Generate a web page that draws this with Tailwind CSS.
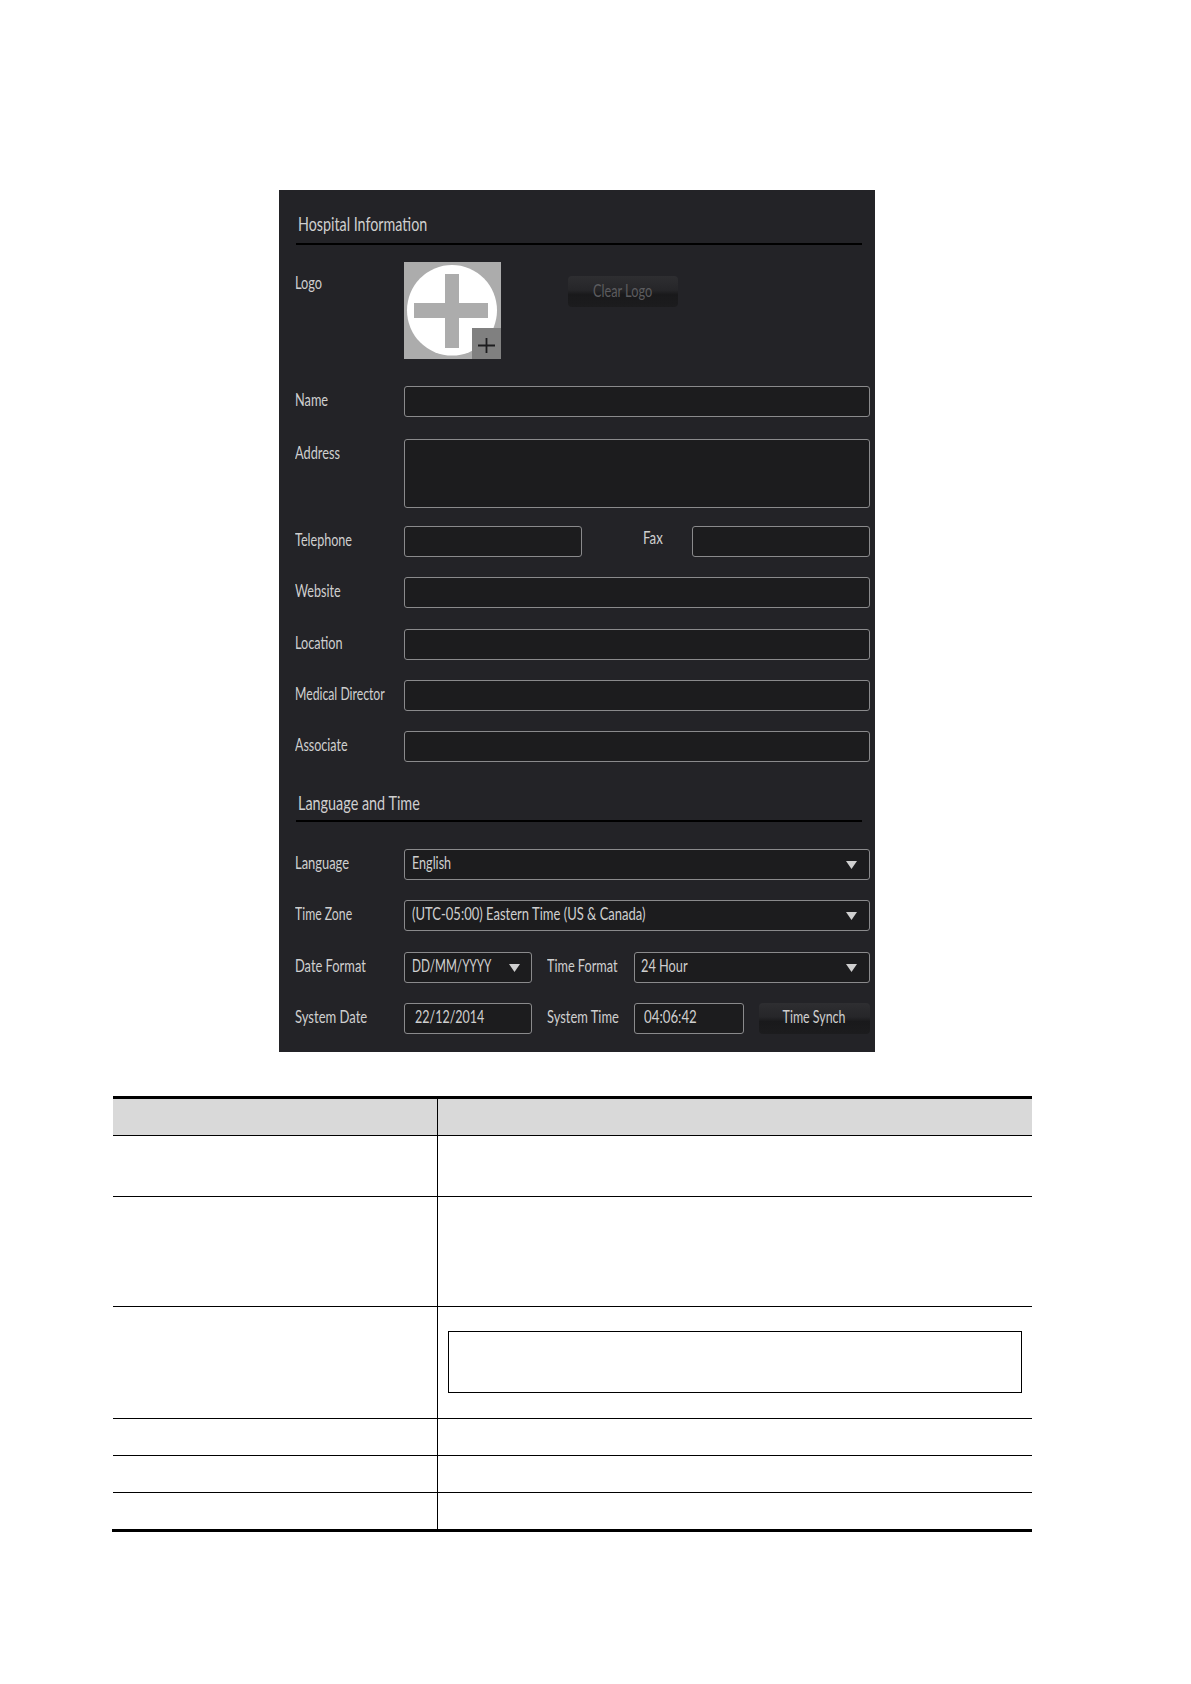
<!DOCTYPE html>
<html lang="en">

<head>
  <meta charset="UTF-8" />
  <title>Hospital Information</title>
  <script src="https://cdn.jsdelivr.net/npm/@tailwindcss/browser@4"></script>
</head>

<body class="bg-white font-['Lato','Liberation_Sans',sans-serif]">

  <div class="pt-[190px] pl-[112px] w-[1191px] h-[1684px]">

    <!-- Settings panel -->
    <div class="ml-[167px] w-[596px] h-[862px] pl-[16px] bg-[#232327] text-[#cfcfcf] text-[17px]">

      <div class="ml-[1px] w-[566px] h-[55px] pt-[19px] pl-[2px] border-b-2 border-black">
        <h2 class="text-[20px] leading-[28px] font-normal whitespace-nowrap origin-left scale-x-[0.715]">Hospital Information</h2>
      </div>

      <div class="flex mt-[17px] h-[97px]">
        <label class="w-[109px] mt-[7px] leading-[28px] whitespace-nowrap origin-left scale-x-[0.75]">Logo</label>
        <div class="relative w-[97px] h-[97px] bg-[#acacac] overflow-hidden">
          <svg width="97" height="97" viewBox="0 0 97 97">
            <ellipse cx="48" cy="48.300" rx="45" ry="45.300" fill="#fff" />
            <path d="M41 12h14v29h29v15H55v30H41V56H10V41h31z" fill="#acacac" />
          </svg>
          <div class="absolute right-0 bottom-0 w-[29px] h-[31px] pt-[3px] bg-[#808080] flex items-center justify-center">
            <svg width="19" height="17" viewBox="0 0 19 17"><path d="M9.500 1v15M1 8.500h17" stroke="#1c1c1e" stroke-width="1.800" /></svg>
          </div>
        </div>
        <button class="ml-[67px] mt-[14px] w-[110px] h-[31px] pb-[1px] rounded-[4px] bg-[linear-gradient(#2e2e31,#262629_45%,#19191b_60%,#1c1c1e)] text-[#5c5c5f]">
          <span class="inline-block whitespace-nowrap scale-x-[0.75]">Clear Logo</span>
        </button>
      </div>

      <div class="flex mt-[27px] h-[31px]">
        <label class="w-[109px] leading-[27px] whitespace-nowrap origin-left scale-x-[0.75]">Name</label>
        <input class="w-[466px] h-[31px] bg-[#1c1c1e] border border-[#8a8a8c] rounded-[3px]" />
      </div>

      <div class="flex mt-[22px] h-[69px]">
        <label class="w-[109px] leading-[28px] whitespace-nowrap origin-left scale-x-[0.75]">Address</label>
        <textarea class="w-[466px] h-[69px] bg-[#1c1c1e] border border-[#8a8a8c] rounded-[3px] resize-none"></textarea>
      </div>

      <div class="flex mt-[18px] h-[31px]">
        <label class="w-[109px] leading-[28px] whitespace-nowrap origin-left scale-x-[0.74]">Telephone</label>
        <input class="w-[178px] h-[31px] bg-[#1c1c1e] border border-[#8a8a8c] rounded-[3px]" />
        <div class="w-[110px] pl-[61px]">
          <label class="block leading-[24px] whitespace-nowrap origin-left scale-x-[0.78]">Fax</label>
        </div>
        <input class="w-[178px] h-[31px] bg-[#1c1c1e] border border-[#8a8a8c] rounded-[3px]" />
      </div>

      <div class="flex mt-[20px] h-[31px]">
        <label class="w-[109px] leading-[28px] whitespace-nowrap origin-left scale-x-[0.74]">Website</label>
        <input class="w-[466px] h-[31px] bg-[#1c1c1e] border border-[#8a8a8c] rounded-[3px]" />
      </div>

      <div class="flex mt-[21px] h-[31px]">
        <label class="w-[109px] leading-[28px] whitespace-nowrap origin-left scale-x-[0.745]">Location</label>
        <input class="w-[466px] h-[31px] bg-[#1c1c1e] border border-[#8a8a8c] rounded-[3px]" />
      </div>

      <div class="flex mt-[20px] h-[31px]">
        <label class="w-[109px] leading-[28px] whitespace-nowrap origin-left scale-x-[0.72]">Medical Director</label>
        <input class="w-[466px] h-[31px] bg-[#1c1c1e] border border-[#8a8a8c] rounded-[3px]" />
      </div>

      <div class="flex mt-[20px] h-[31px]">
        <label class="w-[109px] leading-[28px] whitespace-nowrap origin-left scale-x-[0.735]">Associate</label>
        <input class="w-[466px] h-[31px] bg-[#1c1c1e] border border-[#8a8a8c] rounded-[3px]" />
      </div>

      <div class="ml-[1px] w-[566px] h-[60px] pt-[26px] pl-[2px] border-b-2 border-black">
        <h2 class="text-[20px] leading-[28px] font-normal whitespace-nowrap origin-left scale-x-[0.72]">Language and Time</h2>
      </div>

      <div class="flex mt-[27px] h-[31px]">
        <label class="w-[109px] leading-[27px] whitespace-nowrap origin-left scale-x-[0.76]">Language</label>
        <div class="w-[466px] h-[31px] pl-[7px] pr-[12px] flex items-center bg-[#1c1c1e] border border-[#8a8a8c] rounded-[3px]">
          <span class="flex-1 leading-[25px] self-start whitespace-nowrap origin-left scale-x-[0.74]">English</span>
          <svg class="shrink-0" width="11" height="8" viewBox="0 0 11 8"><path d="M0 0h11L5.500 8z" fill="#cfcfcf" /></svg>
        </div>
      </div>

      <div class="flex mt-[20px] h-[31px]">
        <label class="w-[109px] leading-[28px] whitespace-nowrap origin-left scale-x-[0.72]">Time Zone</label>
        <div class="w-[466px] h-[31px] pl-[7px] pr-[12px] flex items-center bg-[#1c1c1e] border border-[#8a8a8c] rounded-[3px]">
          <span class="flex-1 leading-[26px] self-start whitespace-nowrap origin-left scale-x-[0.765]">(UTC-05:00) Eastern Time (US &amp; Canada)</span>
          <svg class="shrink-0" width="11" height="8" viewBox="0 0 11 8"><path d="M0 0h11L5.500 8z" fill="#cfcfcf" /></svg>
        </div>
      </div>

      <div class="flex mt-[21px] h-[31px]">
        <label class="w-[109px] leading-[27px] whitespace-nowrap origin-left scale-x-[0.757]">Date Format</label>
        <div class="w-[128px] h-[31px] pl-[7px] pr-[11px] flex items-center bg-[#1c1c1e] border border-[#8a8a8c] rounded-[3px]">
          <span class="flex-1 w-0 leading-[25px] self-start whitespace-nowrap origin-left scale-x-[0.69]">DD/MM/YYYY</span>
          <svg class="shrink-0" width="11" height="8" viewBox="0 0 11 8"><path d="M0 0h11L5.500 8z" fill="#cfcfcf" /></svg>
        </div>
        <div class="w-[102px] pl-[15px]">
          <label class="block leading-[27px] whitespace-nowrap origin-left scale-x-[0.746]">Time Format</label>
        </div>
        <div class="w-[236px] h-[31px] pl-[6px] pr-[12px] flex items-center bg-[#1c1c1e] border border-[#8a8a8c] rounded-[3px]">
          <span class="flex-1 leading-[25px] self-start whitespace-nowrap origin-left scale-x-[0.75]">24 Hour</span>
          <svg class="shrink-0" width="11" height="8" viewBox="0 0 11 8"><path d="M0 0h11L5.500 8z" fill="#cfcfcf" /></svg>
        </div>
      </div>

      <div class="flex mt-[20px] h-[31px]">
        <label class="w-[109px] leading-[28px] whitespace-nowrap origin-left scale-x-[0.767]">System Date</label>
        <div class="w-[128px] h-[31px] pl-[10px] bg-[#1c1c1e] border border-[#8a8a8c] rounded-[3px]">
          <span class="block leading-[26px] whitespace-nowrap origin-left scale-x-[0.735]">22/12/2014</span>
        </div>
        <div class="w-[102px] pl-[15px]">
          <label class="block leading-[28px] whitespace-nowrap origin-left scale-x-[0.76]">System Time</label>
        </div>
        <div class="w-[110px] h-[31px] pl-[9px] bg-[#1c1c1e] border border-[#8a8a8c] rounded-[3px]">
          <span class="block leading-[26px] whitespace-nowrap origin-left scale-x-[0.78]">04:06:42</span>
        </div>
        <button class="ml-[15px] w-[111px] h-[31px] pb-[3px] rounded-[4px] bg-[linear-gradient(#2e2e31,#262629_45%,#19191b_60%,#1c1c1e)]">
          <span class="inline-block whitespace-nowrap scale-x-[0.73]">Time Synch</span>
        </button>
      </div>
    </div>

    <!-- Empty table under the panel -->
    <div class="mt-[44px] ml-[1px] w-[919px] border-t-[3px] border-black">
      <div class="flex h-[37px] bg-[#d9d9d9] border-b border-black">
        <div class="w-[325px] border-r border-black"></div>
        <div class="flex-1"></div>
      </div>
      <div class="flex h-[61px] border-b border-black">
        <div class="w-[325px] border-r border-black"></div>
        <div class="flex-1"></div>
      </div>
      <div class="flex h-[110px] border-b border-black">
        <div class="w-[325px] border-r border-black"></div>
        <div class="flex-1"></div>
      </div>
      <div class="flex h-[112px] border-b border-black">
        <div class="w-[325px] border-r border-black"></div>
        <div class="flex-1 pt-[24px] pl-[10px]">
          <div class="w-[574px] h-[62px] border border-black"></div>
        </div>
      </div>
      <div class="flex h-[37px] border-b border-black">
        <div class="w-[325px] border-r border-black"></div>
        <div class="flex-1"></div>
      </div>
      <div class="flex h-[37px] border-b border-black">
        <div class="w-[325px] border-r border-black"></div>
        <div class="flex-1"></div>
      </div>
      <div class="flex h-[36px]">
        <div class="w-[325px] border-r border-black"></div>
        <div class="flex-1"></div>
      </div>
      <div class="-ml-[1px] w-[920px] h-[3px] bg-black"></div>
    </div>
  </div>

</body>

</html>
